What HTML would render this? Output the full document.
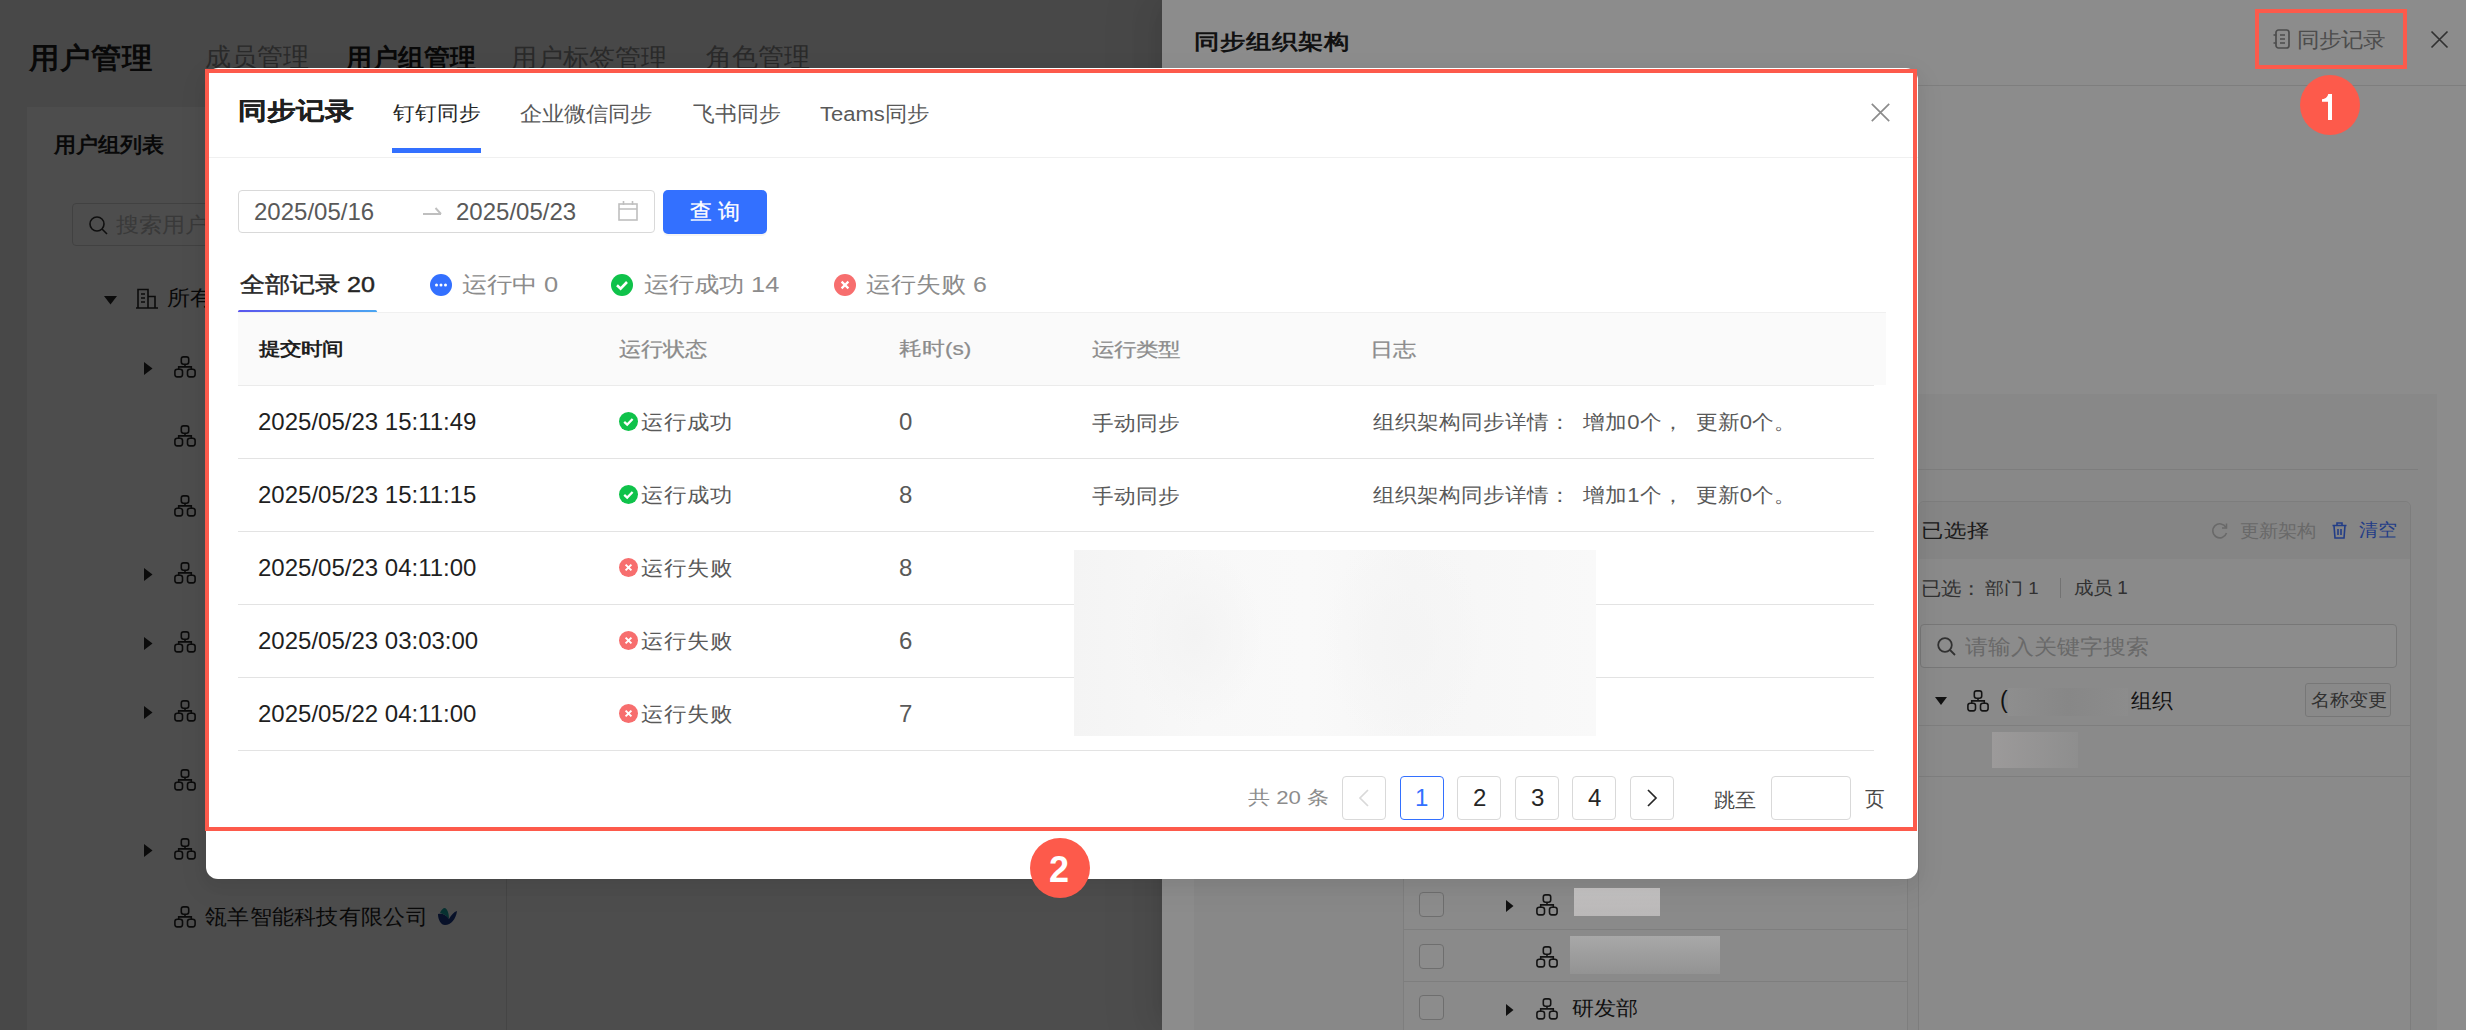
<!DOCTYPE html>
<html><head><meta charset="utf-8">
<style>
html,body{margin:0;padding:0;}
body{width:2466px;height:1030px;overflow:hidden;position:relative;background:#efefef;font-family:"Liberation Sans",sans-serif;}
.a{position:absolute;white-space:nowrap;line-height:1;}
.mask{position:absolute;left:0;top:0;width:2466px;height:1030px;background:rgba(0,0,0,.45);}
svg{position:absolute;overflow:visible;}
</style></head><body>

<!-- ============ LEFT PAGE ============ -->
<div id="page">
<div class="a" style="left:27px;top:107px;width:2439px;height:923px;background:#fff;"></div>
<div class="a" style="left:506px;top:107px;width:1px;height:923px;background:#e6e6e6;"></div>
<div id="t_title" class="a" style="left:29px;top:44px;font-size:30.78px;font-weight:bold;color:#1f1f1f;transform:scaleY(0.954);transform-origin:0 0;">用户管理</div>
<div id="t_tab1" class="a" style="left:205px;top:44px;font-size:26px;color:#8c8c8c;">成员管理</div>
<div id="t_tab2" class="a" style="left:346px;top:45px;font-size:26px;font-weight:bold;color:#1f1f1f;">用户组管理</div>
<div id="t_tab3" class="a" style="left:511px;top:45px;font-size:26px;color:#8c8c8c;">用户标签管理</div>
<div id="t_tab4" class="a" style="left:706px;top:44px;font-size:26px;color:#8c8c8c;">角色管理</div>
<div id="t_grouplist" class="a" style="left:54px;top:135px;font-size:21.96px;font-weight:bold;color:#1f1f1f;transform:scaleY(0.953);transform-origin:0 0;">用户组列表</div>
<div class="a" style="left:72px;top:203px;width:420px;height:43px;box-sizing:border-box;border:1px solid #d9d9d9;border-radius:4px;"></div>
<svg style="left:89px;top:216px" width="19" height="19" viewBox="0 0 19 19"><g fill="none" stroke="#333" stroke-width="1.6"><circle cx="8" cy="8" r="7"/><path d="M13 13l5 5"/></g></svg>
<div id="t_search" class="a" style="left:116px;top:215px;font-size:23.0px;color:#bfbfbf;transform:scaleY(0.909);transform-origin:0 0;">搜索用户组</div>
<svg style="left:104px;top:296px" width="13" height="9" viewBox="0 0 13 9"><path d="M0 0H13L6.5 8.5Z" fill="#262626"/></svg>
<svg style="left:136px;top:288px" width="22" height="21" viewBox="0 0 22 21"><g fill="none" stroke="#262626" stroke-width="1.6"><path d="M2 20V1.5h10V20M12 8.5h7V20M0 20h22M5 6h4M5 10h4M5 14h4"/></g></svg>
<div id="t_all" class="a" style="left:167px;top:288px;font-size:23.0px;color:#1f1f1f;transform:scaleY(0.909);transform-origin:0 0;">所有用户组</div>
<svg style="left:144px;top:362px" width="9" height="13" viewBox="0 0 9 13"><path d="M0 0L8.5 6.5L0 13Z" fill="#262626"/></svg>
<svg style="left:174px;top:356px" width="22" height="22" viewBox="0 0 22 22"><g fill="none" stroke="#262626" stroke-width="1.6"><rect x="7.3" y="0.9" width="7.4" height="7.4" rx="2.2"/><rect x="0.9" y="13.3" width="7.6" height="7.6" rx="2.3"/><rect x="13.5" y="13.3" width="7.6" height="7.6" rx="2.3"/><path d="M11 8.3v2.6M4.7 13.3v-2.4h12.6v2.4"/></g></svg>
<svg style="left:174px;top:425px" width="22" height="22" viewBox="0 0 22 22"><g fill="none" stroke="#262626" stroke-width="1.6"><rect x="7.3" y="0.9" width="7.4" height="7.4" rx="2.2"/><rect x="0.9" y="13.3" width="7.6" height="7.6" rx="2.3"/><rect x="13.5" y="13.3" width="7.6" height="7.6" rx="2.3"/><path d="M11 8.3v2.6M4.7 13.3v-2.4h12.6v2.4"/></g></svg>
<svg style="left:174px;top:495px" width="22" height="22" viewBox="0 0 22 22"><g fill="none" stroke="#262626" stroke-width="1.6"><rect x="7.3" y="0.9" width="7.4" height="7.4" rx="2.2"/><rect x="0.9" y="13.3" width="7.6" height="7.6" rx="2.3"/><rect x="13.5" y="13.3" width="7.6" height="7.6" rx="2.3"/><path d="M11 8.3v2.6M4.7 13.3v-2.4h12.6v2.4"/></g></svg>
<svg style="left:144px;top:568px" width="9" height="13" viewBox="0 0 9 13"><path d="M0 0L8.5 6.5L0 13Z" fill="#262626"/></svg>
<svg style="left:174px;top:562px" width="22" height="22" viewBox="0 0 22 22"><g fill="none" stroke="#262626" stroke-width="1.6"><rect x="7.3" y="0.9" width="7.4" height="7.4" rx="2.2"/><rect x="0.9" y="13.3" width="7.6" height="7.6" rx="2.3"/><rect x="13.5" y="13.3" width="7.6" height="7.6" rx="2.3"/><path d="M11 8.3v2.6M4.7 13.3v-2.4h12.6v2.4"/></g></svg>
<svg style="left:144px;top:637px" width="9" height="13" viewBox="0 0 9 13"><path d="M0 0L8.5 6.5L0 13Z" fill="#262626"/></svg>
<svg style="left:174px;top:631px" width="22" height="22" viewBox="0 0 22 22"><g fill="none" stroke="#262626" stroke-width="1.6"><rect x="7.3" y="0.9" width="7.4" height="7.4" rx="2.2"/><rect x="0.9" y="13.3" width="7.6" height="7.6" rx="2.3"/><rect x="13.5" y="13.3" width="7.6" height="7.6" rx="2.3"/><path d="M11 8.3v2.6M4.7 13.3v-2.4h12.6v2.4"/></g></svg>
<svg style="left:144px;top:706px" width="9" height="13" viewBox="0 0 9 13"><path d="M0 0L8.5 6.5L0 13Z" fill="#262626"/></svg>
<svg style="left:174px;top:700px" width="22" height="22" viewBox="0 0 22 22"><g fill="none" stroke="#262626" stroke-width="1.6"><rect x="7.3" y="0.9" width="7.4" height="7.4" rx="2.2"/><rect x="0.9" y="13.3" width="7.6" height="7.6" rx="2.3"/><rect x="13.5" y="13.3" width="7.6" height="7.6" rx="2.3"/><path d="M11 8.3v2.6M4.7 13.3v-2.4h12.6v2.4"/></g></svg>
<svg style="left:174px;top:769px" width="22" height="22" viewBox="0 0 22 22"><g fill="none" stroke="#262626" stroke-width="1.6"><rect x="7.3" y="0.9" width="7.4" height="7.4" rx="2.2"/><rect x="0.9" y="13.3" width="7.6" height="7.6" rx="2.3"/><rect x="13.5" y="13.3" width="7.6" height="7.6" rx="2.3"/><path d="M11 8.3v2.6M4.7 13.3v-2.4h12.6v2.4"/></g></svg>
<svg style="left:144px;top:844px" width="9" height="13" viewBox="0 0 9 13"><path d="M0 0L8.5 6.5L0 13Z" fill="#262626"/></svg>
<svg style="left:174px;top:838px" width="22" height="22" viewBox="0 0 22 22"><g fill="none" stroke="#262626" stroke-width="1.6"><rect x="7.3" y="0.9" width="7.4" height="7.4" rx="2.2"/><rect x="0.9" y="13.3" width="7.6" height="7.6" rx="2.3"/><rect x="13.5" y="13.3" width="7.6" height="7.6" rx="2.3"/><path d="M11 8.3v2.6M4.7 13.3v-2.4h12.6v2.4"/></g></svg>
<svg style="left:174px;top:906px" width="22" height="22" viewBox="0 0 22 22"><g fill="none" stroke="#262626" stroke-width="1.6"><rect x="7.3" y="0.9" width="7.4" height="7.4" rx="2.2"/><rect x="0.9" y="13.3" width="7.6" height="7.6" rx="2.3"/><rect x="13.5" y="13.3" width="7.6" height="7.6" rx="2.3"/><path d="M11 8.3v2.6M4.7 13.3v-2.4h12.6v2.4"/></g></svg>
<div id="t_company" class="a" style="left:205px;top:907px;font-size:22.4px;letter-spacing:0.3px;color:#1f1f1f;transform:scaleY(0.956);transform-origin:0 0;">瓴羊智能科技有限公司</div>
<svg style="left:437px;top:905px" width="21" height="22" viewBox="0 0 21 22"><path d="M1 9C5 8 10 10 12 14C14 10 17 7 20 6C19 14 14 20 8 20C4 20 1 15 1 9Z" fill="#1d3a8a"/><path d="M8 3C11 5 12 9 12 14C10 11 7 9 3 8C4 5 6 3 8 3Z" fill="#1aa3a3"/></svg>
</div>

<div class="mask"></div>

<!-- ============ DRAWER ============ -->
<div id="drawer" style="position:absolute;left:1162px;top:0;width:1304px;height:1030px;background:#fff;box-shadow:-6px 0 16px -8px rgba(0,0,0,.08),-9px 0 28px 0 rgba(0,0,0,.05),-12px 0 48px 16px rgba(0,0,0,.03);"></div>
<div id="t_dtitle" class="a" style="left:1194px;top:32px;font-size:25.8px;font-weight:bold;color:#1f1f1f;transform:scaleY(0.829);transform-origin:0 0;">同步组织架构</div>
<svg style="left:2273px;top:29px" width="18" height="20" viewBox="0 0 18 20"><g fill="none" stroke="#8c8c8c" stroke-width="1.7"><rect x="3" y="1" width="13" height="18" rx="2.5"/><path d="M7 6h5M7 10h5M7 14h5M0.5 6h3M0.5 14h3"/></g></svg>
<div id="t_dsync" class="a" style="left:2297px;top:30px;font-size:22.13px;color:#8c8c8c;transform:scaleY(0.931);transform-origin:0 0;">同步记录</div>
<svg style="left:2431px;top:31px" width="17" height="17" viewBox="0 0 17 17"><path d="M0.5 0.5L16.5 16.5M16.5 0.5L0.5 16.5" stroke="#595959" stroke-width="1.7"/></svg>
<div class="a" style="left:1162px;top:85px;width:1304px;height:1px;background:#e6e6e6;"></div>
<div class="a" style="left:1194px;top:394px;width:1243px;height:636px;background:#f7f7f7;"></div>
<div class="a" style="left:1214px;top:469px;width:1204px;height:1px;background:#e3e3e3;"></div>
<div class="a" style="left:1403px;top:820px;width:505px;height:220px;box-sizing:border-box;background:#fcfcfc;border:1px solid #e6e6e6;"></div>
<div class="a" style="left:1403px;top:929px;width:505px;height:1px;background:#e6e6e6;"></div>
<div class="a" style="left:1403px;top:981px;width:505px;height:1px;background:#e6e6e6;"></div>
<div class="a" style="left:1419px;top:892px;width:25px;height:25px;box-sizing:border-box;border:1px solid #c8c8c8;border-radius:4px;background:#fff;"></div>
<div class="a" style="left:1419px;top:944px;width:25px;height:25px;box-sizing:border-box;border:1px solid #c8c8c8;border-radius:4px;background:#fff;"></div>
<div class="a" style="left:1419px;top:995px;width:25px;height:25px;box-sizing:border-box;border:1px solid #c8c8c8;border-radius:4px;background:#fff;"></div>
<svg style="left:1506px;top:900px" width="8" height="12" viewBox="0 0 8 12"><path d="M0 0L7.5 6L0 12Z" fill="#1f1f1f"/></svg>
<svg style="left:1536px;top:894px" width="22" height="22" viewBox="0 0 22 22"><g fill="none" stroke="#262626" stroke-width="1.6"><rect x="7.3" y="0.9" width="7.4" height="7.4" rx="2.2"/><rect x="0.9" y="13.3" width="7.6" height="7.6" rx="2.3"/><rect x="13.5" y="13.3" width="7.6" height="7.6" rx="2.3"/><path d="M11 8.3v2.6M4.7 13.3v-2.4h12.6v2.4"/></g></svg>
<svg style="left:1536px;top:946px" width="22" height="22" viewBox="0 0 22 22"><g fill="none" stroke="#262626" stroke-width="1.6"><rect x="7.3" y="0.9" width="7.4" height="7.4" rx="2.2"/><rect x="0.9" y="13.3" width="7.6" height="7.6" rx="2.3"/><rect x="13.5" y="13.3" width="7.6" height="7.6" rx="2.3"/><path d="M11 8.3v2.6M4.7 13.3v-2.4h12.6v2.4"/></g></svg>
<svg style="left:1506px;top:1004px" width="8" height="12" viewBox="0 0 8 12"><path d="M0 0L7.5 6L0 12Z" fill="#1f1f1f"/></svg>
<svg style="left:1536px;top:998px" width="22" height="22" viewBox="0 0 22 22"><g fill="none" stroke="#262626" stroke-width="1.6"><rect x="7.3" y="0.9" width="7.4" height="7.4" rx="2.2"/><rect x="0.9" y="13.3" width="7.6" height="7.6" rx="2.3"/><rect x="13.5" y="13.3" width="7.6" height="7.6" rx="2.3"/><path d="M11 8.3v2.6M4.7 13.3v-2.4h12.6v2.4"/></g></svg>
<div id="t_rd" class="a" style="left:1572px;top:999px;font-size:22.12px;color:#1f1f1f;transform:scaleY(0.905);transform-origin:0 0;">研发部</div>

<div class="a" style="left:1918px;top:501px;width:493px;height:560px;box-sizing:border-box;background:#fcfcfc;border:1px solid #e3e3e3;border-radius:6px;"></div>
<div class="a" style="left:1919px;top:502px;width:491px;height:57px;background:#f2f2f2;border-radius:6px 6px 0 0;"></div>
<div id="t_sel" class="a" style="left:1921px;top:522px;font-size:22.59px;color:#333;transform:scaleY(0.851);transform-origin:0 0;">已选择</div>
<svg style="left:2211px;top:522px" width="17" height="17" viewBox="0 0 17 17"><path d="M15 5.5A7 7 0 1 0 15.5 11" fill="none" stroke="#bfbfbf" stroke-width="1.6"/><path d="M15.5 1.5v4.5h-4.5" fill="none" stroke="#bfbfbf" stroke-width="1.6"/></svg>
<div id="t_upd" class="a" style="left:2240px;top:522px;font-size:19.35px;color:#bfbfbf;transform:scaleY(0.934);transform-origin:0 0;">更新架构</div>
<svg style="left:2332px;top:522px" width="15" height="17" viewBox="0 0 15 17"><g fill="none" stroke="#3f6ff5" stroke-width="1.6"><path d="M0.5 3.5h14M5 3.5V1h5v2.5M2 3.5l1 12.5h9l1-12.5M6 7v6M9 7v6"/></g></svg>
<div id="t_clr" class="a" style="left:2359px;top:522px;font-size:18.95px;color:#3f6ff5;transform:scaleY(0.948);transform-origin:0 0;">清空</div>
<div id="t_yx" class="a" style="left:1921px;top:579px;font-size:20.0px;color:#595959;transform:scaleY(0.931);transform-origin:0 0;">已选：</div>
<div id="t_bm" class="a" style="left:1985px;top:581px;font-size:18.58px;color:#595959;transform:scaleY(0.891);transform-origin:0 0;">部门 1</div>
<div class="a" style="left:2060px;top:578px;width:1px;height:20px;background:#d0d0d0;"></div>
<div id="t_cy" class="a" style="left:2074px;top:580px;font-size:18.9px;color:#595959;transform:scaleY(0.926);transform-origin:0 0;">成员 1</div>
<div class="a" style="left:1920px;top:624px;width:477px;height:44px;box-sizing:border-box;border:1px solid #d9d9d9;border-radius:4px;background:#fff;"></div>
<svg style="left:1937px;top:637px" width="19" height="19" viewBox="0 0 19 19"><g fill="none" stroke="#595959" stroke-width="1.8"><circle cx="8" cy="8" r="6.8"/><path d="M13 13l5 5"/></g></svg>
<div id="t_ph" class="a" style="left:1965px;top:638px;font-size:22.51px;color:#bfbfbf;transform:scaleY(0.915);transform-origin:0 0;">请输入关键字搜索</div>
<svg style="left:1935px;top:697px" width="12" height="8" viewBox="0 0 12 8"><path d="M0 0H12L6 8Z" fill="#1f1f1f"/></svg>
<svg style="left:1967px;top:690px" width="22" height="22" viewBox="0 0 22 22"><g fill="none" stroke="#262626" stroke-width="1.6"><rect x="7.3" y="0.9" width="7.4" height="7.4" rx="2.2"/><rect x="0.9" y="13.3" width="7.6" height="7.6" rx="2.3"/><rect x="13.5" y="13.3" width="7.6" height="7.6" rx="2.3"/><path d="M11 8.3v2.6M4.7 13.3v-2.4h12.6v2.4"/></g></svg>

<div id="t_paren" class="a" style="left:2000px;top:689px;font-size:23px;color:#1f1f1f;">(</div>
<div id="t_zz" class="a" style="left:2131px;top:690px;font-size:21.2px;color:#1f1f1f;transform:scaleY(1.011);transform-origin:0 0;">组织</div>
<div class="a" style="left:2305px;top:683px;width:86px;height:34px;box-sizing:border-box;border:1px solid #d9d9d9;border-radius:3px;background:#fafafa;"></div>
<div id="t_tag" class="a" style="left:2311px;top:692px;font-size:18.71px;color:#595959;transform:scaleY(0.942);transform-origin:0 0;">名称变更</div>
<div class="a" style="left:1919px;top:725px;width:491px;height:1px;background:#e6e6e6;"></div>
<div class="a" style="left:1919px;top:776px;width:491px;height:1px;background:#e6e6e6;"></div>


<div class="mask"></div>

<div class="a" style="left:1574px;top:888px;width:86px;height:28px;background:linear-gradient(#c4c2c2,#bab8b8);"></div>
<div class="a" style="left:1570px;top:936px;width:150px;height:38px;background:linear-gradient(#a8a8a8,#939393);"></div>
<div class="a" style="left:2008px;top:688px;width:120px;height:28px;background:linear-gradient(90deg,#8e8e8e,#878787 50%,#8c8c8c);"></div>
<div class="a" style="left:1992px;top:732px;width:86px;height:36px;background:linear-gradient(90deg,#9c9a9a,#8e8e8e);"></div>

<!-- ============ MODAL ============ -->
<div id="modal" style="position:absolute;left:206px;top:68px;width:1712px;height:811px;background:#fff;border-radius:12px;box-shadow:0 6px 16px 0 rgba(0,0,0,.05),0 9px 28px 8px rgba(0,0,0,.03);"></div>

<div id="t_mtitle" class="a" style="left:238px;top:99px;font-size:28.73px;font-weight:bold;color:#1f1f1f;transform:scaleY(0.834);transform-origin:0 0;-webkit-text-stroke:0.3px currentColor;">同步记录</div>
<div id="t_mt1" class="a" style="left:393px;top:103px;font-size:21.71px;color:#262626;transform:scaleY(0.923);transform-origin:0 0;">钉钉同步</div>
<div id="t_mt2" class="a" style="left:520px;top:104px;font-size:21.97px;color:#595959;transform:scaleY(0.942);transform-origin:0 0;">企业微信同步</div>
<div id="t_mt3" class="a" style="left:693px;top:104px;font-size:21.55px;color:#595959;transform:scaleY(0.961);transform-origin:0 0;">飞书同步</div>
<div id="t_mt4" class="a" style="left:820px;top:104px;font-size:22.02px;color:#595959;transform:scaleY(0.939);transform-origin:0 0;">Teams同步</div>
<div class="a" style="left:392px;top:148px;width:89px;height:5px;background:#3370ff;"></div>
<div class="a" style="left:206px;top:157px;width:1712px;height:1px;background:#f0f0f0;"></div>
<svg style="left:1871px;top:103px" width="19" height="19" viewBox="0 0 19 19"><path d="M0.8 0.8L18.2 18.2M18.2 0.8L0.8 18.2" stroke="#8c8c8c" stroke-width="1.7"/></svg>
<div class="a" style="left:238px;top:190px;width:417px;height:43px;box-sizing:border-box;border:1px solid #d9d9d9;border-radius:4px;"></div>
<div id="t_d1" class="a" style="left:254px;top:200px;font-size:24px;color:#595959;">2025/05/16</div>
<svg style="left:423px;top:205px" width="19" height="11" viewBox="0 0 19 11"><path d="M0 9H18M12.5 3L18 9" fill="none" stroke="#bfbfbf" stroke-width="1.9"/></svg>
<div id="t_d2" class="a" style="left:456px;top:200px;font-size:24px;color:#595959;">2025/05/23</div>
<svg style="left:618px;top:201px" width="20" height="20" viewBox="0 0 20 20"><g fill="none" stroke="#bfbfbf" stroke-width="1.6"><rect x="1" y="3" width="18" height="16"/><path d="M1 8h18M5.5 0v4M14.5 0v4"/></g></svg>
<div class="a" style="left:663px;top:190px;width:104px;height:44px;background:#3370ff;border-radius:5px;box-shadow:0 2px 0 rgba(0,0,0,.04);"></div>
<div id="t_btn" class="a" style="left:690px;top:201px;font-size:22px;color:#fff;letter-spacing:6px;-webkit-text-stroke:0.3px #fff;">查询</div>
<div id="t_s1" class="a" style="left:240px;top:274px;font-size:25.16px;color:#262626;transform:scaleY(0.871);transform-origin:0 0;-webkit-text-stroke:0.5px currentColor;">全部记录 20</div>
<div class="a" style="left:238px;top:310px;width:139px;height:3px;border-radius:2px;background:linear-gradient(90deg,#5a55ee,#4aa6f2);"></div>
<div class="a" style="left:238px;top:312px;width:1648px;height:1px;background:#f0f0f0;"></div>
<svg style="left:430px;top:274px" width="22" height="22" viewBox="0 0 22 22"><circle cx="11" cy="11" r="11" fill="#3370ff"/><circle cx="6.5" cy="11" r="1.5" fill="#fff"/><circle cx="11" cy="11" r="1.5" fill="#fff"/><circle cx="15.5" cy="11" r="1.5" fill="#fff"/></svg>
<div id="t_s2" class="a" style="left:462px;top:274px;font-size:25.45px;color:#8c8c8c;transform:scaleY(0.865);transform-origin:0 0;">运行中 0</div>
<svg style="left:611px;top:274px" width="22" height="22" viewBox="0 0 22 22"><circle cx="11" cy="11" r="11" fill="#0fc24a"/><path d="M6 11.2L9.6 14.6L16 8" fill="none" stroke="#fff" stroke-width="2.6"/></svg>
<div id="t_s3" class="a" style="left:644px;top:274px;font-size:25.4px;color:#8c8c8c;transform:scaleY(0.867);transform-origin:0 0;">运行成功 14</div>
<svg style="left:834px;top:274px" width="22" height="22" viewBox="0 0 22 22"><circle cx="11" cy="11" r="11" fill="#f76e6e"/><path d="M7.6 7.6L14.4 14.4M14.4 7.6L7.6 14.4" fill="none" stroke="#fff" stroke-width="2.2"/></svg>
<div id="t_s4" class="a" style="left:866px;top:274px;font-size:24.85px;color:#8c8c8c;transform:scaleY(0.882);transform-origin:0 0;">运行失败 6</div>
<div class="a" style="left:238px;top:313px;width:1648px;height:72px;background:#fafafa;"></div>
<div class="a" style="left:238px;top:385px;width:1636px;height:1px;background:#ebebeb;"></div>
<div id="t_h1" class="a" style="left:259px;top:341px;font-size:21.47px;font-weight:bold;color:#1f1f1f;transform:scaleY(0.835);transform-origin:0 0;">提交时间</div>
<div id="t_h2" class="a" style="left:619px;top:340px;font-size:21.77px;color:#8c8c8c;transform:scaleY(0.899);transform-origin:0 0;-webkit-text-stroke:0.3px currentColor;">运行状态</div>
<div id="t_h3" class="a" style="left:899px;top:340px;font-size:22.6px;color:#8c8c8c;transform:scaleY(0.833);transform-origin:0 0;-webkit-text-stroke:0.3px currentColor;">耗时(s)</div>
<div id="t_h4" class="a" style="left:1092px;top:341px;font-size:22.11px;color:#8c8c8c;transform:scaleY(0.839);transform-origin:0 0;-webkit-text-stroke:0.3px currentColor;">运行类型</div>
<div id="t_h5" class="a" style="left:1370px;top:341px;font-size:22.6px;color:#8c8c8c;transform:scaleY(0.821);transform-origin:0 0;-webkit-text-stroke:0.3px currentColor;">日志</div>
<div class="a" style="left:238px;top:458px;width:1636px;height:1px;background:#e3e3e3;"></div>
<div id="t_r0_t" class="a" style="left:258px;top:410px;font-size:24px;color:#1f1f1f;">2025/05/23 15:11:49</div>
<svg style="left:619px;top:412px" width="19" height="19" viewBox="0 0 19 19"><circle cx="9.5" cy="9.5" r="9.5" fill="#0fc24a"/><path d="M5.2 9.8L8.2 12.6L13.6 7" fill="none" stroke="#fff" stroke-width="2.3"/></svg>
<div id="t_r0_s" class="a" style="left:641px;top:413px;font-size:22.51px;color:#595959;transform:scaleY(0.896);transform-origin:0 0;">运行成功</div>
<div id="t_r0_d" class="a" style="left:899px;top:410px;font-size:24px;color:#595959;">0</div>
<div id="t_r0_y" class="a" style="left:1092px;top:413px;font-size:22.09px;color:#595959;transform:scaleY(0.924);transform-origin:0 0;">手动同步</div>
<div id="t_r0_l" class="a" style="left:1373px;top:412px;font-size:22.1px;color:#595959;white-space:pre;transform:scaleY(0.924);transform-origin:0 0;">组织架构同步详情：  增加0个，  更新0个。</div>
<div class="a" style="left:238px;top:531px;width:1636px;height:1px;background:#e3e3e3;"></div>
<div id="t_r1_t" class="a" style="left:258px;top:483px;font-size:24px;color:#1f1f1f;">2025/05/23 15:11:15</div>
<svg style="left:619px;top:485px" width="19" height="19" viewBox="0 0 19 19"><circle cx="9.5" cy="9.5" r="9.5" fill="#0fc24a"/><path d="M5.2 9.8L8.2 12.6L13.6 7" fill="none" stroke="#fff" stroke-width="2.3"/></svg>
<div id="t_r1_s" class="a" style="left:641px;top:486px;font-size:22.51px;color:#595959;transform:scaleY(0.896);transform-origin:0 0;">运行成功</div>
<div id="t_r1_d" class="a" style="left:899px;top:483px;font-size:24px;color:#595959;">8</div>
<div id="t_r1_y" class="a" style="left:1092px;top:486px;font-size:22.09px;color:#595959;transform:scaleY(0.924);transform-origin:0 0;">手动同步</div>
<div id="t_r1_l" class="a" style="left:1373px;top:485px;font-size:22.1px;color:#595959;white-space:pre;transform:scaleY(0.924);transform-origin:0 0;">组织架构同步详情：  增加1个，  更新0个。</div>
<div class="a" style="left:238px;top:604px;width:1636px;height:1px;background:#e3e3e3;"></div>
<div id="t_r2_t" class="a" style="left:258px;top:556px;font-size:24px;color:#1f1f1f;">2025/05/23 04:11:00</div>
<svg style="left:619px;top:558px" width="19" height="19" viewBox="0 0 19 19"><circle cx="9.5" cy="9.5" r="9.5" fill="#f76e6e"/><path d="M6.6 6.6L12.4 12.4M12.4 6.6L6.6 12.4" fill="none" stroke="#fff" stroke-width="2"/></svg>
<div id="t_r2_s" class="a" style="left:641px;top:559px;font-size:22.51px;color:#595959;transform:scaleY(0.896);transform-origin:0 0;">运行失败</div>
<div id="t_r2_d" class="a" style="left:899px;top:556px;font-size:24px;color:#595959;">8</div>
<div class="a" style="left:238px;top:677px;width:1636px;height:1px;background:#e3e3e3;"></div>
<div id="t_r3_t" class="a" style="left:258px;top:629px;font-size:24px;color:#1f1f1f;">2025/05/23 03:03:00</div>
<svg style="left:619px;top:631px" width="19" height="19" viewBox="0 0 19 19"><circle cx="9.5" cy="9.5" r="9.5" fill="#f76e6e"/><path d="M6.6 6.6L12.4 12.4M12.4 6.6L6.6 12.4" fill="none" stroke="#fff" stroke-width="2"/></svg>
<div id="t_r3_s" class="a" style="left:641px;top:632px;font-size:22.51px;color:#595959;transform:scaleY(0.896);transform-origin:0 0;">运行失败</div>
<div id="t_r3_d" class="a" style="left:899px;top:629px;font-size:24px;color:#595959;">6</div>
<div class="a" style="left:238px;top:750px;width:1636px;height:1px;background:#e3e3e3;"></div>
<div id="t_r4_t" class="a" style="left:258px;top:702px;font-size:24px;color:#1f1f1f;">2025/05/22 04:11:00</div>
<svg style="left:619px;top:704px" width="19" height="19" viewBox="0 0 19 19"><circle cx="9.5" cy="9.5" r="9.5" fill="#f76e6e"/><path d="M6.6 6.6L12.4 12.4M12.4 6.6L6.6 12.4" fill="none" stroke="#fff" stroke-width="2"/></svg>
<div id="t_r4_s" class="a" style="left:641px;top:705px;font-size:22.51px;color:#595959;transform:scaleY(0.896);transform-origin:0 0;">运行失败</div>
<div id="t_r4_d" class="a" style="left:899px;top:702px;font-size:24px;color:#595959;">7</div>

<div class="a" style="left:1074px;top:550px;width:522px;height:186px;background:radial-gradient(ellipse 70px 90px at 120px 85px,#f3f3f3,rgba(243,243,243,0)),radial-gradient(ellipse 80px 110px at 330px 90px,#f4f4f4,rgba(244,244,244,0)),linear-gradient(90deg,#f4f4f4,#f8f8f8 25%,#f9f9f9 45%,#f6f6f6 65%,#f9f9f9);"></div>
<div id="t_total" class="a" style="left:1248px;top:789px;font-size:22.17px;color:#8c8c8c;transform:scaleY(0.861);transform-origin:0 0;">共 20 条</div>
<div class="a" style="left:1342px;top:776px;width:44px;height:44px;box-sizing:border-box;border:1px solid #d9d9d9;border-radius:4px;"></div>
<svg style="left:1358px;top:789px" width="12" height="18" viewBox="0 0 12 18"><path d="M10 1L2 9L10 17" fill="none" stroke="#d9d9d9" stroke-width="1.7"/></svg>
<div class="a" style="left:1400px;top:776px;width:44px;height:44px;box-sizing:border-box;border:1px solid #3370ff;border-radius:4px;"></div>
<div id="t_p1" class="a" style="left:1415px;top:786px;font-size:24px;color:#3370ff;">1</div>
<div class="a" style="left:1457px;top:776px;width:44px;height:44px;box-sizing:border-box;border:1px solid #d9d9d9;border-radius:4px;"></div>
<div id="t_p2" class="a" style="left:1473px;top:786px;font-size:24px;color:#262626;">2</div>
<div class="a" style="left:1515px;top:776px;width:44px;height:44px;box-sizing:border-box;border:1px solid #d9d9d9;border-radius:4px;"></div>
<div id="t_p3" class="a" style="left:1531px;top:786px;font-size:24px;color:#262626;">3</div>
<div class="a" style="left:1572px;top:776px;width:44px;height:44px;box-sizing:border-box;border:1px solid #d9d9d9;border-radius:4px;"></div>
<div id="t_p4" class="a" style="left:1588px;top:786px;font-size:24px;color:#262626;">4</div>
<div class="a" style="left:1630px;top:776px;width:44px;height:44px;box-sizing:border-box;border:1px solid #d9d9d9;border-radius:4px;"></div>
<svg style="left:1646px;top:789px" width="12" height="18" viewBox="0 0 12 18"><path d="M2 1L10 9L2 17" fill="none" stroke="#262626" stroke-width="1.7"/></svg>

<div id="t_jump" class="a" style="left:1714px;top:790px;font-size:21.08px;color:#4a4a4a;transform:scaleY(0.951);transform-origin:0 0;">跳至</div>
<div class="a" style="left:1771px;top:776px;width:80px;height:44px;box-sizing:border-box;border:1px solid #d9d9d9;border-radius:4px;"></div>
<div id="t_ye" class="a" style="left:1865px;top:789px;font-size:19.65px;color:#4a4a4a;transform:scaleY(1.069);transform-origin:0 0;">页</div>


<!-- ============ ANNOTATIONS ============ -->
<div style="position:absolute;left:205px;top:69px;width:1712px;height:762px;box-sizing:border-box;border:4px solid #fd5a4b;"></div>
<div style="position:absolute;left:2255px;top:9px;width:152px;height:60px;box-sizing:border-box;border:4px solid #fd5a4b;"></div>
<div style="position:absolute;left:2300px;top:75px;width:60px;height:60px;border-radius:50%;background:#fd5a4b;"></div>
<div style="position:absolute;left:1030px;top:838px;width:60px;height:60px;border-radius:50%;background:#fd5a4b;"></div>


<svg style="left:2320px;top:90px" width="14" height="32" viewBox="0 0 14 32"><path d="M12 4H8.3C7.6 6.2 6.4 8.8 2 9.2V11.8H8V30H12Z" fill="#fff"/></svg>
<div id="t_b2" class="a" style="left:1049px;top:852px;font-size:36px;font-weight:bold;color:#fff;">2</div>
</body></html>
